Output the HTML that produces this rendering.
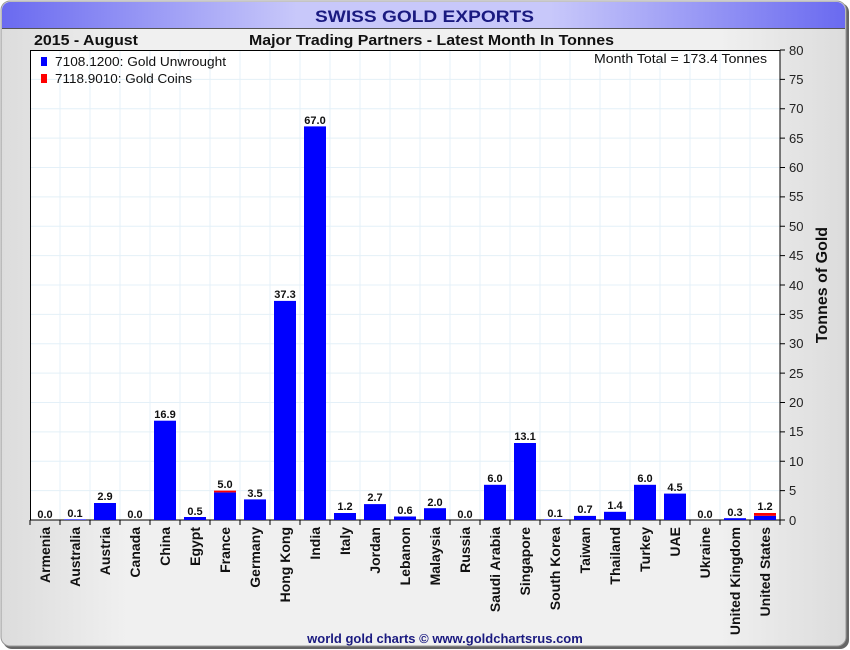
<!DOCTYPE html>
<html><head><meta charset="utf-8"><style>
html,body{margin:0;padding:0;background:#fff;}
svg{display:block;font-family:"Liberation Sans",sans-serif;}
</style></head><body>
<svg width="850" height="650" viewBox="0 0 850 650" xmlns="http://www.w3.org/2000/svg">
<defs>
<linearGradient id="tb" x1="0" x2="1" y1="0" y2="0">
<stop offset="0" stop-color="#6a6af0"/><stop offset="0.35" stop-color="#c8c8fa"/><stop offset="0.65" stop-color="#c8c8fa"/><stop offset="1" stop-color="#6a6af0"/></linearGradient>
<linearGradient id="bg" x1="0" x2="1" y1="0" y2="0">
<stop offset="0" stop-color="#dcdcdc"/><stop offset="0.15" stop-color="#f0f0f0"/><stop offset="0.85" stop-color="#f0f0f0"/><stop offset="1" stop-color="#dcdcdc"/></linearGradient>
</defs>
<rect x="0" y="0" width="850" height="650" fill="#fff"/>
<rect x="3" y="3" width="846" height="646" rx="9" fill="#666"/>
<rect x="1" y="1" width="845" height="645" rx="9" fill="url(#bg)" stroke="#999" stroke-width="1"/>
<path d="M2,28 V10 A8,8 0 0 1 10,2 H837 A8,8 0 0 1 845,10 V28 Z" fill="url(#tb)"/>
<line x1="2" y1="28.5" x2="845" y2="28.5" stroke="#555"/>
<text x="315" y="22" font-size="17" font-weight="bold" fill="#1a1a80" textLength="219" lengthAdjust="spacingAndGlyphs">SWISS GOLD EXPORTS</text>
<text x="34" y="45" font-size="15" font-weight="bold" fill="#111" textLength="104" lengthAdjust="spacingAndGlyphs">2015 - August</text>
<text x="249" y="45" font-size="15" font-weight="bold" fill="#111" textLength="365" lengthAdjust="spacingAndGlyphs">Major Trading Partners - Latest Month In Tonnes</text>
<rect x="30" y="50" width="750" height="470" fill="#fff"/>
<g stroke="#e4f0f8" stroke-width="1">
<path d="M60,50V520M90,50V520M120,50V520M150,50V520M180,50V520M210,50V520M240,50V520M270,50V520M300,50V520M330,50V520M360,50V520M390,50V520M420,50V520M450,50V520M480,50V520M510,50V520M540,50V520M570,50V520M600,50V520M630,50V520M660,50V520M690,50V520M720,50V520M750,50V520"/>
<path d="M30,79.4H780M30,108.8H780M30,138.1H780M30,167.5H780M30,196.9H780M30,226.3H780M30,255.6H780M30,285H780M30,314.4H780M30,343.8H780M30,373.1H780M30,402.5H780M30,431.9H780M30,461.3H780M30,490.6H780"/>
</g>
<rect x="30.5" y="50.5" width="749.5" height="469.5" fill="none" stroke="#000"/>
<rect x="41" y="57" width="6" height="9" fill="#0000ff"/>
<text x="55" y="66" font-size="13" fill="#111" textLength="171" lengthAdjust="spacingAndGlyphs">7108.1200: Gold Unwrought</text>
<rect x="41" y="74" width="6" height="9" fill="#ff0000"/>
<text x="55" y="83" font-size="13" fill="#111" textLength="137" lengthAdjust="spacingAndGlyphs">7118.9010: Gold Coins</text>
<text x="767" y="63" text-anchor="end" font-size="13" fill="#111" textLength="173" lengthAdjust="spacingAndGlyphs">Month Total = 173.4 Tonnes</text>
<g fill="#0000ff">
<rect x="64" y="519.4" width="22" height="0.6"/>
<rect x="94" y="503" width="22" height="17"/>
<rect x="154" y="420.7" width="22" height="99.3"/>
<rect x="184" y="517" width="22" height="3"/>
<rect x="214" y="492.4" width="22" height="27.6"/>
<rect x="244" y="499.4" width="22" height="20.6"/>
<rect x="274" y="300.9" width="22" height="219.1"/>
<rect x="304" y="126.4" width="22" height="393.6"/>
<rect x="334" y="513" width="22" height="7"/>
<rect x="364" y="504.1" width="22" height="15.9"/>
<rect x="394" y="516.5" width="22" height="3.5"/>
<rect x="424" y="508.2" width="22" height="11.8"/>
<rect x="484" y="484.8" width="22" height="35.2"/>
<rect x="514" y="443" width="22" height="77"/>
<rect x="544" y="519.4" width="22" height="0.6"/>
<rect x="574" y="515.9" width="22" height="4.1"/>
<rect x="604" y="511.8" width="22" height="8.2"/>
<rect x="634" y="484.8" width="22" height="35.2"/>
<rect x="664" y="493.6" width="22" height="26.4"/>
<rect x="724" y="518.2" width="22" height="1.8"/>
<rect x="754" y="515.8" width="22" height="4.2"/>
</g>
<g fill="#ff0000">
<rect x="214" y="490.6" width="22" height="1.8"/>
<rect x="754" y="513" width="22" height="2.8"/>
</g>
<g font-size="11" font-weight="bold" fill="#111" text-anchor="middle">
<text x="45" y="518">0.0</text><text x="75" y="517">0.1</text><text x="105" y="500">2.9</text><text x="135" y="518">0.0</text>
<text x="165" y="418">16.9</text><text x="195" y="515">0.5</text><text x="225" y="488">5.0</text><text x="255" y="497">3.5</text>
<text x="285" y="298">37.3</text><text x="315" y="124">67.0</text><text x="345" y="510">1.2</text><text x="375" y="501">2.7</text>
<text x="405" y="514">0.6</text><text x="435" y="506">2.0</text><text x="465" y="518">0.0</text><text x="495" y="482">6.0</text>
<text x="525" y="440">13.1</text><text x="555" y="517">0.1</text><text x="585" y="513">0.7</text><text x="615" y="509">1.4</text>
<text x="645" y="482">6.0</text><text x="675" y="491">4.5</text><text x="705" y="518">0.0</text><text x="735" y="516">0.3</text><text x="765" y="510">1.2</text>
</g>
<g stroke="#000"><path d="M30,520V525M60,520V525M90,520V525M120,520V525M150,520V525M180,520V525M210,520V525M240,520V525M270,520V525M300,520V525M330,520V525M360,520V525M390,520V525M420,520V525M450,520V525M480,520V525M510,520V525M540,520V525M570,520V525M600,520V525M630,520V525M660,520V525M690,520V525M720,520V525M750,520V525M780,520V525"/>
<path d="M780,50H785M780,79.4H785M780,108.8H785M780,138.1H785M780,167.5H785M780,196.9H785M780,226.3H785M780,255.6H785M780,285H785M780,314.4H785M780,343.8H785M780,373.1H785M780,402.5H785M780,431.9H785M780,461.3H785M780,490.6H785M780,520H785"/></g>
<g font-size="13" fill="#222">
<text x="789" y="55">80</text><text x="789" y="84">75</text><text x="789" y="113">70</text><text x="789" y="143">65</text><text x="789" y="172">60</text><text x="789" y="201">55</text><text x="789" y="231">50</text><text x="789" y="260">45</text><text x="789" y="290">40</text><text x="789" y="319">35</text><text x="789" y="348">30</text><text x="789" y="378">25</text><text x="789" y="407">20</text><text x="789" y="436">15</text><text x="789" y="466">10</text><text x="789" y="495">5</text><text x="789" y="525">0</text>
</g>
<text transform="translate(827,285) rotate(-90)" text-anchor="middle" font-size="16" font-weight="bold" fill="#111">Tonnes of Gold</text>
<g font-size="14" font-weight="bold" fill="#111" text-anchor="end">
<text transform="translate(50,527) rotate(-90)">Armenia</text>
<text transform="translate(80,527) rotate(-90)">Australia</text>
<text transform="translate(110,527) rotate(-90)">Austria</text>
<text transform="translate(140,527) rotate(-90)">Canada</text>
<text transform="translate(170,527) rotate(-90)">China</text>
<text transform="translate(200,527) rotate(-90)">Egypt</text>
<text transform="translate(230,527) rotate(-90)">France</text>
<text transform="translate(260,527) rotate(-90)">Germany</text>
<text transform="translate(290,527) rotate(-90)">Hong Kong</text>
<text transform="translate(320,527) rotate(-90)">India</text>
<text transform="translate(350,527) rotate(-90)">Italy</text>
<text transform="translate(380,527) rotate(-90)">Jordan</text>
<text transform="translate(410,527) rotate(-90)">Lebanon</text>
<text transform="translate(440,527) rotate(-90)">Malaysia</text>
<text transform="translate(470,527) rotate(-90)">Russia</text>
<text transform="translate(500,527) rotate(-90)">Saudi Arabia</text>
<text transform="translate(530,527) rotate(-90)">Singapore</text>
<text transform="translate(560,527) rotate(-90)">South Korea</text>
<text transform="translate(590,527) rotate(-90)">Taiwan</text>
<text transform="translate(620,527) rotate(-90)">Thailand</text>
<text transform="translate(650,527) rotate(-90)">Turkey</text>
<text transform="translate(680,527) rotate(-90)">UAE</text>
<text transform="translate(710,527) rotate(-90)">Ukraine</text>
<text transform="translate(740,527) rotate(-90)">United Kingdom</text>
<text transform="translate(770,527) rotate(-90)">United States</text>
</g>
<text x="445" y="643" text-anchor="middle" font-size="13" font-weight="bold" fill="#1a1a80">world gold charts © www.goldchartsrus.com</text>
</svg>
</body></html>
